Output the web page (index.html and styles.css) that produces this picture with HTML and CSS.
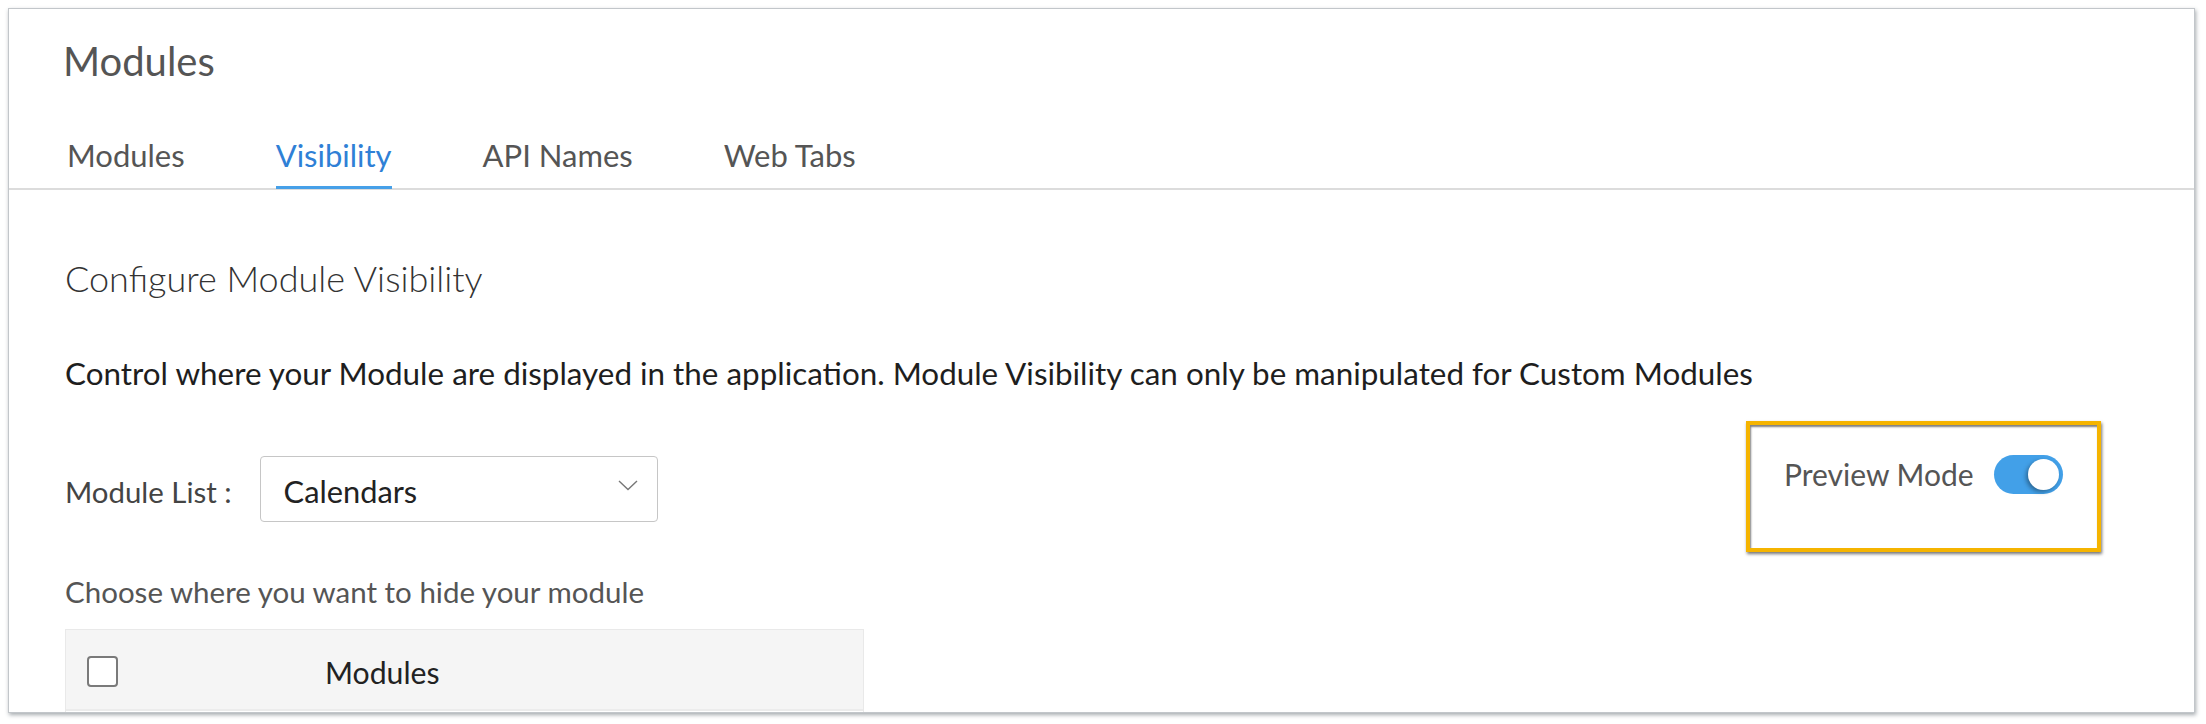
FILE: index.html
```html
<!DOCTYPE html>
<html lang="en">
<head>
<meta charset="utf-8">
<title>Modules - Visibility</title>
<link rel="stylesheet" href="styles.css">
</head>
<body>
<div class="card">
  <header class="head">
    <h1 class="title">Modules</h1>
    <nav class="tabs">
      <span class="tab">Modules</span>
      <span class="tab active">Visibility</span>
      <span class="tab">API Names</span>
      <span class="tab">Web Tabs</span>
    </nav>
  </header>
  <section class="body">
    <h2 class="subtitle">Configure Module Visibility</h2>
    <p class="desc">Control where your Module are displayed in the application. Module Visibility can only be manipulated for Custom Modules</p>
    <div class="list-row">
      <span class="list-label">Module List :</span>
      <div class="select">
        <span class="select-value">Calendars</span>
        <svg class="chevron" width="20" height="11" viewBox="0 0 20 11"><path d="M1 1 L10 9.5 L19 1" fill="none" stroke="#777" stroke-width="1.4"/></svg>
      </div>
    </div>
    <p class="choose">Choose where you want to hide your module</p>
    <div class="table">
      <div class="thead">
        <span class="checkbox"></span>
        <span class="th">Modules</span>
      </div>
      <div class="trow"></div>
    </div>
  </section>
  <div class="preview">
    <span class="preview-label">Preview Mode</span>
    <span class="toggle"><span class="knob"></span></span>
  </div>
</div>
</body>
</html>
```
FILE: styles.css
```css
html, body {
  margin: 0;
  padding: 0;
  background: #ffffff;
}
body {
  padding: 8px;
  font-family: Lato, "Open Sans", "Liberation Sans", sans-serif;
  overflow: hidden;
}
.card {
  position: relative;
  box-sizing: border-box;
  width: 2187px;
  height: 705px;
  border: 1px solid #c2c6ca;
  background: #fff;
  box-shadow: 1px 2px 4px rgba(60, 70, 80, 0.45);
  overflow: hidden;
}
.head {
  padding-top: 28px;
}
.title {
  margin: 0 0 0 54px;
  font-size: 40px;
  line-height: 48px;
  font-weight: 400;
  color: #555;
}
.tabs {
  display: flex;
  gap: 91px;
  margin-top: 53px;
  padding-left: 58px;
  border-bottom: 2px solid #dcdcdc;
}
.tab {
  font-size: 31px;
  line-height: 34px;
  color: #555;
  padding-bottom: 14px;
  border-bottom: 3px solid transparent;
  margin-bottom: -1px;
}
.tab.active {
  color: #2f80d6;
  border-bottom-color: #46a0e8;
}
.body {
  padding-left: 56px;
}
.subtitle {
  margin: 67px 0 0;
  font-size: 36px;
  line-height: 43px;
  font-weight: 300;
  color: #333;
}
.desc {
  margin: 56px 0 0;
  font-size: 31.4px;
  line-height: 34px;
  color: #1e1e1e;
}
.list-row {
  display: flex;
  align-items: center;
  margin-top: 66px;
  gap: 28px;
}
.list-label {
  font-size: 29.4px;
  line-height: 34px;
  color: #444;
  padding-top: 6px;
}
.select {
  box-sizing: border-box;
  width: 398px;
  height: 66px;
  border: 1px solid #c6c6c6;
  border-radius: 4px;
  display: flex;
  align-items: center;
  justify-content: space-between;
  padding: 6px 19px 0 23px;
}
.select-value {
  font-size: 30.8px;
  line-height: 34px;
  color: #222;
}
.chevron {
  margin-top: -14px;
}
.choose {
  margin: 53px 0 0;
  font-size: 29.5px;
  line-height: 34px;
  color: #555;
}
.table {
  margin-top: 20px;
  width: 799px;
  border: 1px solid #e9e9e9;
  box-sizing: border-box;
}
.thead {
  display: flex;
  align-items: center;
  height: 79px;
  background: #f5f5f5;
  border-bottom: 2px solid #ececec;
  padding-left: 21px;
}
.checkbox {
  box-sizing: border-box;
  width: 31px;
  height: 31px;
  border: 2px solid #7a7a7a;
  border-radius: 4px;
  background: #fff;
  margin-top: 3px;
}
.th {
  margin-left: 207px;
  font-size: 30.2px;
  line-height: 34px;
  color: #222;
  padding-top: 5px;
}
.trow {
  height: 60px;
  background: #fff;
}
.preview {
  position: absolute;
  left: 1737px;
  top: 412px;
  box-sizing: border-box;
  width: 355px;
  height: 131px;
  border: 4px solid #f5b400;
  box-shadow: 1px 2px 3px rgba(0, 0, 0, 0.55), inset 1px 2px 2px rgba(0, 0, 0, 0.5);
  display: flex;
  align-items: flex-start;
  padding: 30px 0 0 34px;
  gap: 20px;
}
.preview-label {
  font-size: 30px;
  line-height: 39px;
  color: #555;
}
.toggle {
  position: relative;
  width: 69px;
  height: 39px;
  border-radius: 20px;
  background: #42a0e8;
}
.knob {
  position: absolute;
  top: 4px;
  right: 4px;
  width: 31px;
  height: 31px;
  border-radius: 50%;
  background: #fff;
  box-shadow: -2px 2px 4px rgba(0, 0, 0, 0.35);
}
```
